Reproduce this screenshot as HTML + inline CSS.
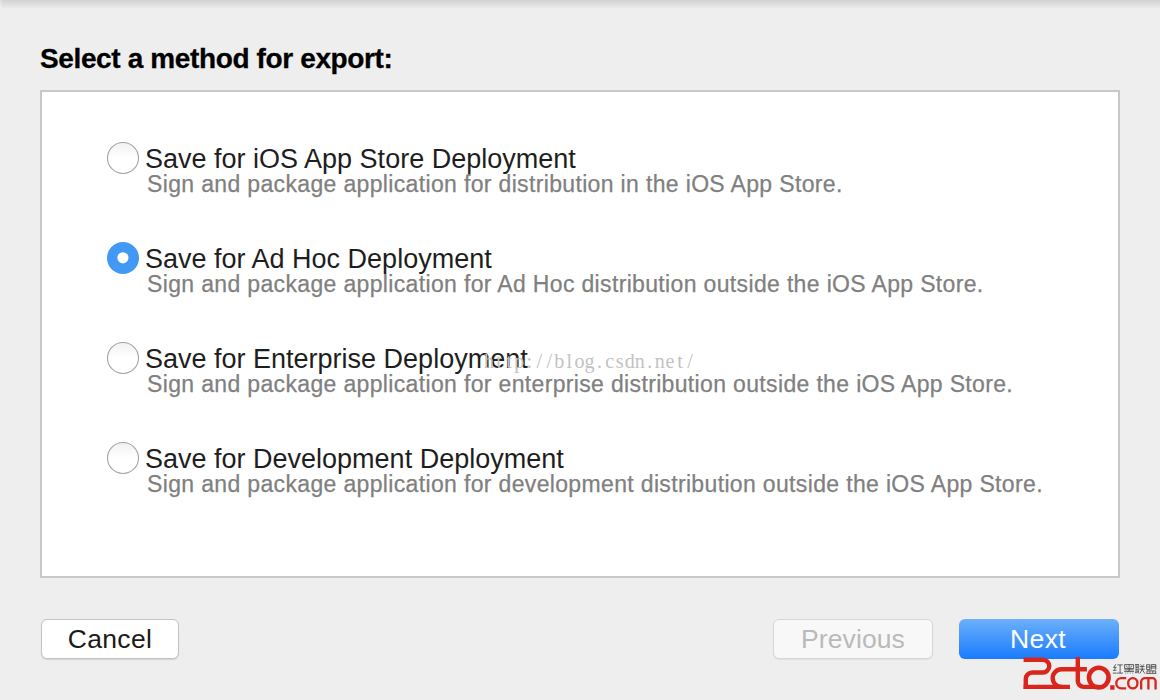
<!DOCTYPE html>
<html><head><meta charset="utf-8">
<style>
html,body{margin:0;padding:0;}
body{width:1160px;height:700px;overflow:hidden;position:relative;background:#eeeeee;font-family:"Liberation Sans",sans-serif;}
.topshade{position:absolute;left:0;top:0;width:1160px;height:8px;background:linear-gradient(#d5d5d5 0,#d5d5d5 2px,#dbdbdb 2px,#dbdbdb 4px,#e1e1e1 4px,#e1e1e1 6px,#e7e7e7 6px,#e7e7e7 8px);}
.abs{position:absolute;white-space:pre;}
.title{left:40px;top:41px;font-size:28px;font-weight:700;color:#000;letter-spacing:-0.37px;line-height:36px;-webkit-text-stroke:0.3px #000;}
.box{position:absolute;left:40px;top:90px;width:1076px;height:484px;border:2px solid #c8c8c8;background:#fff;}
.opt{font-size:27px;color:#1e1e1e;letter-spacing:0px;line-height:30px;}
.desc{font-size:23px;color:#808080;letter-spacing:0.345px;line-height:26px;-webkit-text-stroke:0.25px #808080;}
.radio{position:absolute;width:30px;height:30px;border-radius:50%;border:1px solid #9c9c9c;background:#fff;box-shadow:inset 0 1px 1px rgba(0,0,0,0.10);box-sizing:content-box;}
.radio.on{border:1px solid #4099f5;background:#4099f5;}
.radio.on:after{content:"";position:absolute;left:10px;top:10px;width:11px;height:11px;border-radius:50%;background:#fff;box-shadow:0 1px 1px rgba(0,60,140,0.25);}
.btn{position:absolute;top:619px;height:40px;box-sizing:border-box;border-radius:6px;font-size:26.5px;letter-spacing:0.3px;text-align:center;line-height:38px;}
.cancel{left:41px;width:138px;background:#fff;border:1px solid #c4c4c4;box-shadow:0 1px 1px rgba(0,0,0,0.12);color:#1a1a1a;}
.prev{left:773px;width:160px;background:#f8f8f8;border:1px solid #d6d6d6;box-shadow:0 1px 1px rgba(0,0,0,0.06);color:#bababa;}
.next{left:959px;width:160px;background:linear-gradient(#6cb0fa,#1a7bfe);border:none;color:#fff;line-height:40px;letter-spacing:0.4px;text-indent:-2px;}
.wm{position:absolute;top:349px;left:484px;color:#c2c2c2;font-family:"Liberation Serif",serif;font-size:20px;line-height:24px;white-space:nowrap;}
.wm span{display:inline-block;width:10.05px;text-align:center;}
</style></head>
<body>
<div class="topshade"></div><div style="position:absolute;left:0;top:0;width:2px;height:8px;background:rgba(255,255,255,0.25);"></div>
<div class="abs title">Select a method for export:</div>
<div class="box"></div>

<svg width="34" height="34" viewBox="0 0 34 34" style="position:absolute;left:106px;top:141px;"><defs><linearGradient id="rg0" x1="0" y1="0" x2="0" y2="1"><stop offset="0" stop-color="#f1f1f1"/><stop offset="0.5" stop-color="#ffffff"/></linearGradient></defs><circle cx="17" cy="17" r="15.5" fill="url(#rg0)" stroke="#a3a3a3" stroke-width="1.1"/></svg>
<div class="abs opt" style="left:145px;top:144px;">Save for iOS App Store Deployment</div>
<div class="abs desc" style="left:147px;top:171px;">Sign and package application for distribution in the iOS App Store.</div>

<svg width="34" height="34" viewBox="0 0 34 34" style="position:absolute;left:106px;top:241px;"><circle cx="17" cy="17" r="16" fill="#4199f5"/><circle cx="16.9" cy="17.3" r="5.6" fill="#2a78d0" opacity="0.35"/><circle cx="16.9" cy="16.8" r="5.6" fill="#fff"/></svg>
<div class="abs opt" style="left:145px;top:244px;">Save for Ad Hoc Deployment</div>
<div class="abs desc" style="left:147px;top:271px;">Sign and package application for Ad Hoc distribution outside the iOS App Store.</div>

<svg width="34" height="34" viewBox="0 0 34 34" style="position:absolute;left:106px;top:341px;"><defs><linearGradient id="rg2" x1="0" y1="0" x2="0" y2="1"><stop offset="0" stop-color="#f1f1f1"/><stop offset="0.5" stop-color="#ffffff"/></linearGradient></defs><circle cx="17" cy="17" r="15.5" fill="url(#rg2)" stroke="#a3a3a3" stroke-width="1.1"/></svg>
<div class="abs opt" style="left:145px;top:344px;">Save for Enterprise Deployment</div>
<div class="abs desc" style="left:147px;top:371px;">Sign and package application for enterprise distribution outside the iOS App Store.</div>

<svg width="34" height="34" viewBox="0 0 34 34" style="position:absolute;left:106px;top:441px;"><defs><linearGradient id="rg3" x1="0" y1="0" x2="0" y2="1"><stop offset="0" stop-color="#f1f1f1"/><stop offset="0.5" stop-color="#ffffff"/></linearGradient></defs><circle cx="17" cy="17" r="15.5" fill="url(#rg3)" stroke="#a3a3a3" stroke-width="1.1"/></svg>
<div class="abs opt" style="left:145px;top:444px;">Save for Development Deployment</div>
<div class="abs desc" style="left:147px;top:471px;">Sign and package application for development distribution outside the iOS App Store.</div>

<div class="wm"><span>h</span><span>t</span><span>t</span><span>p</span><span>:</span><span>/</span><span>/</span><span>b</span><span>l</span><span>o</span><span>g</span><span>.</span><span>c</span><span>s</span><span>d</span><span>n</span><span>.</span><span>n</span><span>e</span><span>t</span><span>/</span></div>

<div class="btn cancel">Cancel</div>
<div class="btn prev" style="letter-spacing:0.1px;">Previous</div>
<div class="btn next">Next</div>


<svg class="logo" width="145" height="50" viewBox="1015 650 145 50" style="position:absolute;left:1015px;top:650px;">
 <g fill="none" stroke="#d9251c" stroke-width="4.4">
  <path d="M1023.6,659.75 H1042.9 A6.35,6.35 0 0 1 1042.9,672.45 H1032.4 A6.6,6.6 0 0 0 1025.8,679.05 V689.1"/>
  <path d="M1023.6,686.9 H1070"/>
  <path d="M1086.9,669.3 H1061.5 A8.8,8.8 0 0 0 1061.5,686.9"/>
  <path d="M1077.8,656.9 V681 A5.9,5.9 0 0 0 1083.7,686.9 H1098.8"/>
  <circle cx="1098.8" cy="677.6" r="9.8" stroke-width="4.6"/>
 </g>
 <rect x="1110.2" y="685.2" width="4.3" height="4.5" fill="#d9251c"/>
 <g fill="none" stroke="#d9251c" stroke-width="2.3">
  <path d="M1126.2,678.15 H1121.4 A5.1,5.1 0 0 0 1121.4,688.35 H1126.2"/>
  <ellipse cx="1132.8" cy="683.25" rx="4.65" ry="5.1"/>
  <path d="M1141.15,689.4 V682 A3.9,3.9 0 0 1 1145.05,678.15 H1152.5 A3.1,3.1 0 0 1 1155.6,681.25 V689.4 M1148.4,678.15 V689.4"/>
 </g>
 <g fill="none" stroke="#3a3a3a" stroke-width="0.8">
  <path d="M1115.8,664.2 L1113.6,667.6 L1116.2,667.2 L1113.4,670.6 L1116.6,670 M1112.8,673.1 H1116.6"/>
  <path d="M1117.4,664.9 H1122.8 M1120.1,664.9 V673.1 M1117,673.1 H1123"/>
  <path d="M1124.6,664.6 H1133.6 V668.6 H1124.6 Z M1126.2,665.6 L1127.4,667.6 M1131.8,665.6 L1130.6,667.6 M1129.1,664.6 V671.6 M1124.4,669.9 H1133.8 M1124.2,671.6 H1134 M1125,673.2 H1125.6 M1127.5,673.2 H1128.1 M1130,673.2 H1130.6 M1132.5,673.2 H1133.2"/>
  <path d="M1135,664.6 H1139 M1136,664.6 V673.3 M1138.2,664.6 V673.3 M1136,667.2 H1138.2 M1136,669.8 H1138.2 M1135,672.4 L1139,671.6 M1140.6,664.4 L1141.4,665.8 M1143.8,664.4 L1143,665.8 M1139.6,666.6 H1144.6 M1139.4,669.2 H1144.8 M1142.2,665.8 V669.4 L1139.8,673.6 M1142.2,669.6 L1144.9,673.6"/>
  <path d="M1146.6,664.7 H1149.8 V669.6 H1146.6 Z M1146.6,667.1 H1149.8 M1151.2,664.6 H1155.8 V669.8 M1151.2,664.6 V669.4 L1150.4,670.2 M1151.2,666.4 H1155.8 M1151.2,668 H1155.8 M1147,670.9 H1155.6 V673 M1147,670.9 V673 M1149.9,670.9 V673 M1152.8,670.9 V673 M1146.2,673.4 H1156.4"/>
 </g>
</svg>
</body></html>
